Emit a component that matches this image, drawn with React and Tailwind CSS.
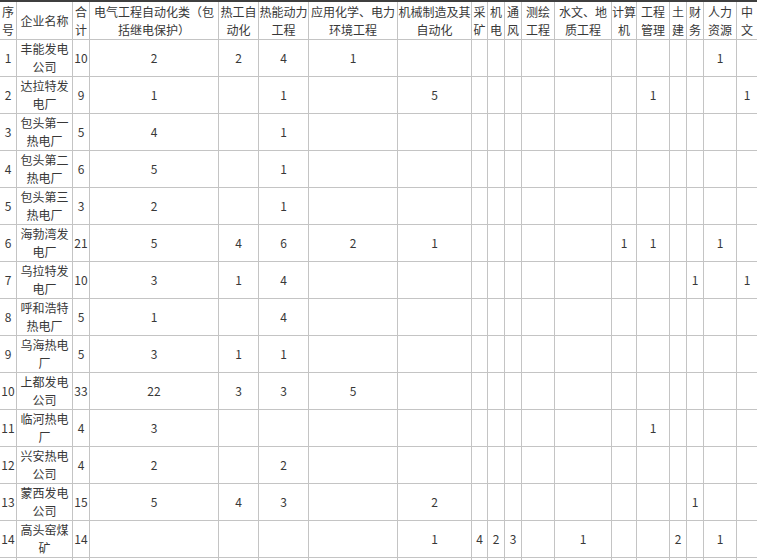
import React from "react";

const headers = [
  "序号",
  "企业名称",
  "合计",
  "电气工程自动化类（包括继电保护）",
  "热工自动化",
  "热能动力工程",
  "应用化学、电力环境工程",
  "机械制造及其自动化",
  "采矿",
  "机电",
  "通风",
  "测绘工程",
  "水文、地质工程",
  "计算机",
  "工程管理",
  "土建",
  "财务",
  "人力资源",
  "中文",
];

const rowsData = [
  ["1", "丰能发电公司", "10", { 3: "2", 4: "2", 5: "4", 6: "1", 17: "1" }],
  ["2", "达拉特发电厂", "9", { 3: "1", 5: "1", 7: "5", 14: "1", 18: "1" }],
  ["3", "包头第一热电厂", "5", { 3: "4", 5: "1" }],
  ["4", "包头第二热电厂", "6", { 3: "5", 5: "1" }],
  ["5", "包头第三热电厂", "3", { 3: "2", 5: "1" }],
  ["6", "海勃湾发电厂", "21", { 3: "5", 4: "4", 5: "6", 6: "2", 7: "1", 13: "1", 14: "1", 17: "1" }],
  ["7", "乌拉特发电厂", "10", { 3: "3", 4: "1", 5: "4", 16: "1", 18: "1" }],
  ["8", "呼和浩特热电厂", "5", { 3: "1", 5: "4" }],
  ["9", "乌海热电厂", "5", { 3: "3", 4: "1", 5: "1" }],
  ["10", "上都发电公司", "33", { 3: "22", 4: "3", 5: "3", 6: "5" }],
  ["11", "临河热电厂", "4", { 3: "3", 14: "1" }],
  ["12", "兴安热电公司", "4", { 3: "2", 5: "2" }],
  ["13", "蒙西发电公司", "15", { 3: "5", 4: "4", 5: "3", 7: "2", 16: "1" }],
  ["14", "高头窑煤矿", "14", { 7: "1", 8: "4", 9: "2", 10: "3", 12: "1", 15: "2", 17: "1" }],
  ["", "", "", {}],
];

function Cell({ children, header }) {
  return (
    <div
      className={
        "flex items-center justify-center text-center border-r border-b border-[#c4c4c4] text-[12px] leading-[18px] text-[#383838] break-all [text-spacing-trim:space-all] " +
        (header ? "h-[38px]" : "h-[37px]")
      }
    >
      {children}
    </div>
  );
}

export default function App() {
  return (
    <div
      className="w-[757px] h-[560px] overflow-hidden bg-white"
      style={{ fontFamily: '"Noto Sans CJK SC", "Noto Sans", sans-serif' }}
    >
      <div className="h-[2px] bg-[#3f3f3f]" />
      <div className="grid w-[758px] grid-cols-[17px_56px_17px_129px_40px_50px_89px_74px_16px_17px_17px_33px_57px_25px_33px_17px_17px_33px_21px]">
        {headers.map((h, i) => (
          <Cell header key={"h" + i}>
            {h}
          </Cell>
        ))}
        {rowsData.map((r, ri) =>
          headers.map((_, ci) => {
            let v = "";
            if (ci === 0) v = r[0];
            else if (ci === 1) v = r[1];
            else if (ci === 2) v = r[2];
            else v = r[3][ci] || "";
            return <Cell key={ri + "-" + ci}>{v}</Cell>;
          })
        )}
      </div>
    </div>
  );
}
